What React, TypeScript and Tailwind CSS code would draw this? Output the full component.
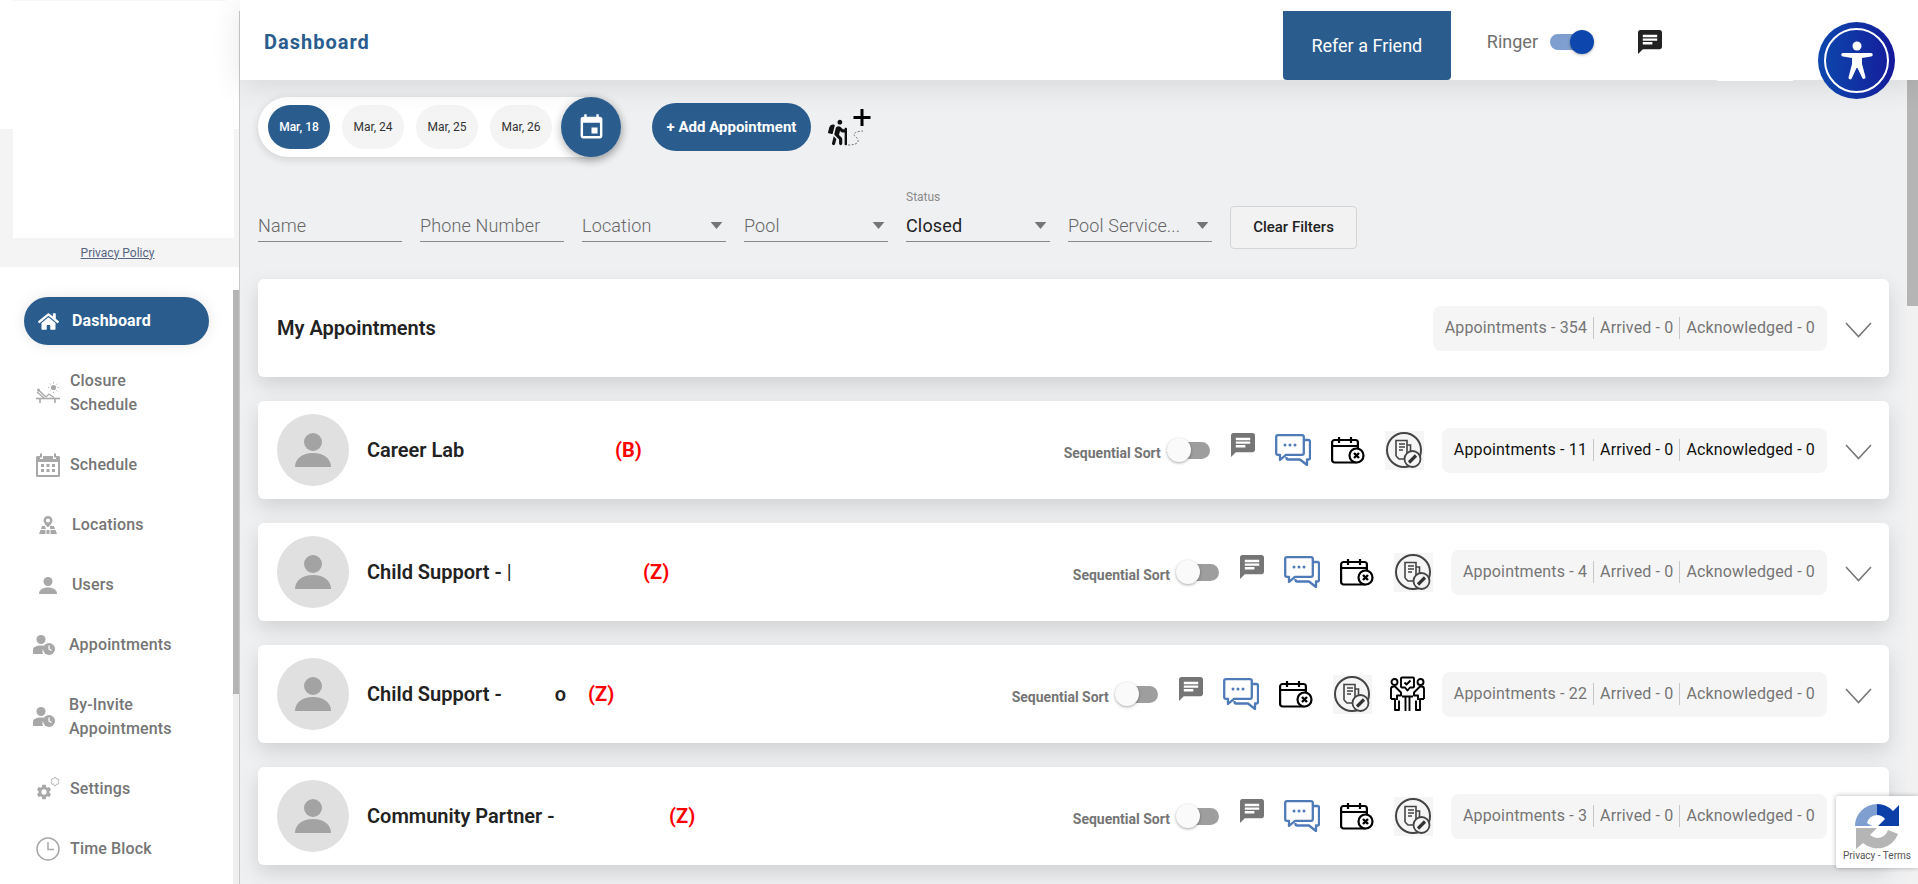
import React from 'react';
import { FaHome, FaHiking } from 'react-icons/fa';

const Chat = ({ className }: { className: string }) => (
  <svg viewBox="2 2 20 20" className={className} fill="currentColor">
    <path d="M20 2H4c-1.1 0-1.99.9-1.99 2L2 22l4-4h14c1.1 0 2-.9 2-2V4c0-1.1-.9-2-2-2zM6 9h12v2H6V9zm8 5H6v-2h8v2zm4-6H6V6h12v2z" />
  </svg>
);

const BlueChat = () => (
  <svg viewBox="0 0 36 32" className="w-[36px] h-[32px] shrink-0" fill="none" stroke="#4f7ab8" strokeWidth="2.3" strokeLinejoin="round">
    <path d="M29 6h4.5a1.5 1.5 0 0 1 1.5 1.5V24a1.5 1.5 0 0 1-1.5 1.5H32V31l-7-5.5H13a1.5 1.5 0 0 1-1.5-1.5v-1" />
    <path d="M3 1.2h24a1.8 1.8 0 0 1 1.8 1.8v16a1.8 1.8 0 0 1-1.8 1.8H11L5 26v-5.2H3A1.8 1.8 0 0 1 1.2 19V3A1.8 1.8 0 0 1 3 1.2z" />
    <g fill="#4f7ab8" stroke="none">
      <circle cx="10" cy="11" r="1.5" />
      <circle cx="15" cy="11" r="1.5" />
      <circle cx="20" cy="11" r="1.5" />
    </g>
  </svg>
);

const CalX = () => (
  <svg viewBox="0 0 34 28" className="w-[34px] h-[28px] shrink-0" fill="none" stroke="#000" strokeWidth="2.2">
    <rect x="1.1" y="4" width="25.8" height="22.5" rx="2.5" />
    <path d="M1 10h26M8 1v6M20 1v6" />
    <circle cx="25.5" cy="19.5" r="7" fill="#fff" />
    <path d="M23 17l5 5M28 17l-5 5" strokeWidth="2.4" />
  </svg>
);

const DocEdit = () => (
  <svg viewBox="0 0 39 39" className="w-[39px] h-[39px] shrink-0" fill="none" stroke="#444" strokeWidth="1.6">
    <rect width="39" height="39" fill="#f5f5f5" stroke="none" />
    <circle cx="19" cy="19" r="17" strokeWidth="2" />
    <path d="M11 25V9.5h11V24" />
    <path d="M14 13h6M14 16h6M14 19h4M22 14h3.5V24M11 25l3 3h8" />
    <circle cx="27.5" cy="28" r="8" fill="#f5f5f5" strokeWidth="1.8" />
    <path d="M24 31.5l7-7" strokeWidth="3.2" stroke="#333" />
  </svg>
);

const Team = () => (
  <svg viewBox="0 0 35 36" className="w-[35px] h-[36px] shrink-0" fill="none" stroke="#000" strokeWidth="1.9" strokeLinejoin="round">
    <circle cx="4.5" cy="6" r="3" />
    <circle cx="30.5" cy="6" r="3" />
    <path d="M12 1.5h11a1 1 0 0 1 1 1v8a1 1 0 0 1-1 1h-3l-2.5 3-2.5-3h-3a1 1 0 0 1-1-1v-8a1 1 0 0 1 1-1z" />
    <path d="M14.5 6.5l2 2 4-4" />
    <path d="M1 23V13a2.5 2.5 0 0 1 2.5-2.5H5l6 6v3H7v4.500M1 23h4v11h4V24.500" />
    <path d="M34 23V13a2.500 2.500 0 0 0-2.500-2.500H30l-6 6v3h4v4.500M34 23h-4v11h-4V24.500" />
    <path d="M12 20.500h11M15.500 20.500V35M19.500 20.500V35" />
  </svg>
);

const Person = ({ className }: { className: string }) => (
  <svg viewBox="0 0 36 34" className={className} fill="currentColor">
    <circle cx="18" cy="9" r="9" />
    <path d="M0 34c0-8 7-14 18-14s18 6 18 14z" />
  </svg>
);

// sidebar icons, drawn by hand
const ClosureIcon = () => (
  <svg viewBox="0 0 24 22" className="w-[24px] h-[22px]" fill="none" stroke="#a8a8a8" strokeWidth="1.2">
    <circle cx="17.500" cy="5.500" r="2.600" fill="#a8a8a8" stroke="none" />
    <path d="M17.500 0v1.400M17.500 9.600V11M12 5.500h1.400M21.600 5.500H23M13.600 1.600l1 1M20.400 8.400l1 1M21.400 1.600l-1 1M14.600 8.400l-1 1" strokeWidth="0.8" />
    <circle cx="2.500" cy="8" r="1.500" fill="#a8a8a8" stroke="none" />
    <path d="M1 10l7 6M3 8.500l7 6.500" strokeWidth="1.400" />
    <path d="M10 15l3-3 2 1.500 3 2" />
    <path d="M0 16.500h24" strokeWidth="1.600" />
    <path d="M4 17v4M19 17v4" strokeWidth="1.600" />
  </svg>
);

const ScheduleIcon = () => (
  <svg viewBox="0 0 24 24" className="w-[24px] h-[24px]">
    <path d="M1.500 3H4v3h3V3h10v3h3V3h2.500A1.500 1.500 0 0 1 24 4.500v18a1.500 1.500 0 0 1-1.500 1.500h-21A1.500 1.500 0 0 1 0 22.500v-18A1.500 1.500 0 0 1 1.500 3z" fill="#a8a8a8" />
    <rect x="2" y="9" width="20" height="13" fill="#fff" />
    <path d="M5 0.500v4M19 0.500v4" stroke="#a8a8a8" strokeWidth="2" />
    <g fill="#a8a8a8">
      <rect x="5" y="11" width="3" height="3" />
      <rect x="10.500" y="11" width="3" height="3" />
      <rect x="16" y="11" width="3" height="3" />
      <rect x="5" y="16" width="3" height="3" />
      <rect x="10.500" y="16" width="3" height="3" />
      <rect x="16" y="16" width="3" height="3" />
    </g>
  </svg>
);

const LocationIcon = () => (
  <svg viewBox="0 0 18 18" className="w-[18px] h-[18px]" fill="#a8a8a8">
    <path d="M9 0a4.500 4.500 0 0 0-4.500 4.500C4.500 7.500 9 11.500 9 11.500s4.500-4 4.500-7A4.500 4.500 0 0 0 9 0zm0 6.500a2 2 0 1 1 0-4 2 2 0 0 1 0 4z" />
    <path d="M3 10h3l1 3H2zM11 10h4l1 3h-5zM1.500 14h5v4H0zM7.500 14h3v4h-3zM11.500 14h5l1.500 4h-6.500z" />
  </svg>
);

const UserIcon = () => (
  <svg viewBox="0 0 18 17" className="w-[18px] h-[17px]" fill="#a8a8a8">
    <circle cx="9" cy="4.500" r="4.500" />
    <path d="M0 17c0-4 3.500-6.500 9-6.500s9 2.500 9 6.500z" />
  </svg>
);

const ApptIcon = () => (
  <svg viewBox="0 0 22 20" className="w-[22px] h-[20px]" fill="#a8a8a8">
    <circle cx="8" cy="4.500" r="4.500" />
    <path d="M0 19v-4c0-3 3-4.500 8-4.500 2 0 3.500.3 4.500.8A6.500 6.500 0 0 0 10 19z" />
    <circle cx="16" cy="14" r="6" />
    <path d="M16 10.500V14l2.500 1.500" fill="none" stroke="#fff" strokeWidth="1.300" />
  </svg>
);

const GearIcon = () => (
  <svg viewBox="0 0 24 24" className="w-[24px] h-[24px]" fill="#a8a8a8">
    <g transform="translate(-1 6) scale(0.75)">
      <path d="M19.140 12.940c.04-.3.060-.61.060-.94 0-.32-.02-.64-.07-.94l2.030-1.580a.49.49 0 0 0 .12-.61l-1.920-3.320a.488.488 0 0 0-.59-.22l-2.390.96c-.5-.38-1.030-.7-1.620-.94l-.36-2.540a.484.484 0 0 0-.48-.41h-3.840c-.24 0-.43.17-.47.41l-.36 2.540c-.59.24-1.130.57-1.620.94l-2.390-.96c-.22-.08-.47 0-.59.22L2.740 8.870c-.12.21-.08.47.12.61l2.030 1.580c-.05.3-.09.63-.09.94s.02.64.07.94l-2.030 1.580a.49.49 0 0 0-.12.61l1.920 3.320c.12.22.37.29.59.22l2.390-.96c.5.38 1.030.7 1.620.94l.36 2.540c.05.24.24.41.48.41h3.840c.24 0 .44-.17.47-.41l.36-2.540c.59-.24 1.130-.56 1.620-.94l2.390.96c.22.08.47 0 .59-.22l1.920-3.320c.12-.22.07-.47-.12-.61l-2.010-1.580zM12 15.600c-1.980 0-3.600-1.620-3.600-3.600s1.620-3.600 3.600-3.600 3.600 1.620 3.600 3.600-1.620 3.600-3.600 3.600z" />
    </g>
    <g transform="translate(14 -0.500) scale(0.42)" fill="none" stroke="#a8a8a8" strokeWidth="2">
      <path d="M19.140 12.940c.04-.3.060-.61.060-.94 0-.32-.02-.64-.07-.94l2.030-1.580a.49.49 0 0 0 .12-.61l-1.920-3.320a.488.488 0 0 0-.59-.22l-2.390.96c-.5-.38-1.030-.7-1.620-.94l-.36-2.540a.484.484 0 0 0-.48-.41h-3.840c-.24 0-.43.17-.47.41l-.36 2.540c-.59.24-1.130.57-1.620.94l-2.390-.96c-.22-.08-.47 0-.59.22L2.740 8.870c-.12.21-.08.47.12.61l2.030 1.580c-.05.3-.09.63-.09.94s.02.64.07.94l-2.030 1.580a.49.49 0 0 0-.12.61l1.920 3.320c.12.22.37.29.59.22l2.390-.96c.5.38 1.030.7 1.620.94l.36 2.540c.05.24.24.41.48.41h3.840c.24 0 .44-.17.47-.41l.36-2.540c.59-.24 1.130-.56 1.620-.94l2.390.96c.22.08.47 0 .59-.22l1.920-3.320c.12-.22.07-.47-.12-.61l-2.010-1.580z" />
    </g>
  </svg>
);

const ClockIcon = () => (
  <svg viewBox="0 0 24 24" className="w-[24px] h-[24px]" fill="none" stroke="#a8a8a8" strokeWidth="1.500">
    <circle cx="12" cy="12" r="11" />
    <path d="M12 5v7.500h6" />
  </svg>
);

const nav = [
  { icon: <ClosureIcon />, label: ['Closure', 'Schedule'], h: 'h-[84px]', pl: 'pl-[36px]', w: 'w-[24px]', gap: 'gap-[10px]' },
  { icon: <ScheduleIcon />, label: ['Schedule'], h: 'h-[60px]', pl: 'pl-[36px]', w: 'w-[24px]', gap: 'gap-[10px]' },
  { icon: <LocationIcon />, label: ['Locations'], h: 'h-[60px]', pl: 'pl-[39px]', w: 'w-[18px]', gap: 'gap-[15px]' },
  { icon: <UserIcon />, label: ['Users'], h: 'h-[60px]', pl: 'pl-[39px]', w: 'w-[18px]', gap: 'gap-[15px]' },
  { icon: <ApptIcon />, label: ['Appointments'], h: 'h-[60px]', pl: 'pl-[33px]', w: 'w-[22px]', gap: 'gap-[14px]' },
  { icon: <ApptIcon />, label: ['By-Invite', 'Appointments'], h: 'h-[84px]', pl: 'pl-[33px]', w: 'w-[22px]', gap: 'gap-[14px]' },
  { icon: <GearIcon />, label: ['Settings'], h: 'h-[60px]', pl: 'pl-[36px]', w: 'w-[24px]', gap: 'gap-[10px]' },
  { icon: <ClockIcon />, label: ['Time Block'], h: 'h-[60px]', pl: 'pl-[36px]', w: 'w-[24px]', gap: 'gap-[10px]' },
];

const Sidebar = () => (
  <aside className="w-[240px] shrink-0 flex bg-white">
    <div className="w-[239px] flex flex-col">
      <div className="h-[129px] mx-[13px] border-t border-[#f7f7f7]" />
      <div className="h-[138px] bg-[#f4f4f4] flex flex-col">
        <div className="h-[109px] ml-[13px] mr-[5px] bg-white" />
        <div className="flex-1 flex items-center justify-center pr-[4px]">
          <a className="text-[12px] leading-none underline text-[#56657f]">Privacy Policy</a>
        </div>
      </div>
      <div className="flex flex-1 min-h-0">
        <div className="w-[233px]">
          <div className="mt-[30px] ml-[24px] w-[185px] h-[48px] mb-[6px] rounded-full bg-[#2a5d8e] shadow-[0_0_14px_rgba(0,0,0,0.1)] flex items-center pl-[14px] text-white">
            <FaHome className="w-[21px] h-[19px]" />
            <span className="ml-[13px] text-[16px] font-bold tracking-[0.15px]">Dashboard</span>
          </div>
          {nav.map((n) => (
            <div key={n.label.join()} className={`flex items-center ${n.h} ${n.pl} ${n.gap}`}>
              <span className={`${n.w} flex justify-center shrink-0`}>{n.icon}</span>
              <span className="text-[16px] leading-[24px] font-medium tracking-[0.15px] text-[#757575]">
                {n.label.map((l) => (
                  <div key={l}>{l}</div>
                ))}
              </span>
            </div>
          ))}
        </div>
        <div className="w-[6px] mt-[23px] bg-[#efefef]">
          <div className="h-[404px] bg-[#b5b5b5]" />
        </div>
      </div>
    </div>
    <div className="w-px mt-[11px] bg-[#c9c9c9]" />
  </aside>
);

const dates = ['Mar, 18', 'Mar, 24', 'Mar, 25', 'Mar, 26'];

const DateRow = () => (
  <div className="flex items-center h-[60px]">
    <div className="w-[363px] h-[60px] rounded-full bg-white shadow-[0_2px_8px_rgba(0,0,0,0.14)] flex items-center pl-[10px] gap-[12px]">
      {dates.map((d, i) => (
        <div
          key={d}
          className={`w-[62px] h-[44px] rounded-full flex items-center justify-center text-[12px] ${
            i === 0 ? 'bg-[#2a5d8e] text-white font-medium' : 'bg-[#f4f4f4] text-[#333]'
          }`}
        >
          {d}
        </div>
      ))}
      <div className="w-[60px] h-[60px] rounded-full bg-[#2a5d8e] shadow-[0_3px_10px_rgba(0,0,0,0.3)] -ml-[3px] flex items-center justify-center text-white">
        <svg viewBox="0 0 24 24" className="w-[29px] h-[29px]" fill="currentColor">
          <path d="M17 12h-5v5h5v-5zM16 1v2H8V1H6v2H5c-1.110 0-1.990.9-1.990 2L3 19c0 1.100.89 2 2 2h14c1.100 0 2-.9 2-2V5c0-1.100-.9-2-2-2h-1V1h-2zm3 18H5V8h14v11z" />
        </svg>
      </div>
    </div>
    <button className="ml-[31px] w-[159px] h-[48px] rounded-full bg-[#2a5d8e] text-white text-[15px] font-bold">+ Add Appointment</button>
    <div className="ml-[17px] w-[44px] h-[40px] flex items-end">
      <div className="flex items-end">
        <FaHiking className="w-[19px] h-[29px] text-[#111] shrink-0" />
        <svg viewBox="0 0 25 38" className="w-[25px] h-[38px]" fill="none">
          <path d="M15 0v17M6.500 8.500h17" stroke="#000" strokeWidth="3" />
          <path d="M1 36c5 0 11-1 10-5s-5-4-4-6 6-3 9-3" stroke="#777" strokeWidth="1" strokeDasharray="2 1.500" />
        </svg>
      </div>
    </div>
  </div>
);

const Field = ({ label, select, top, dark }: { label: string; select?: boolean; top?: string; dark?: boolean }) => (
  <div className="w-[144px] h-[52px] flex flex-col shrink-0">
    <div className="h-[14px] text-[12px] leading-[14px] text-[#8a8a8a]">{top}</div>
    <div className="flex-1 flex items-center justify-between border-b border-[#8a8a8a] pb-[2px] mt-[8px]">
      <span className={`text-[18px] font-light tracking-[0.15px] whitespace-nowrap ${dark ? 'text-[#222] font-normal' : 'text-[#666]'}`}>{label}</span>
      {select && (
        <svg viewBox="0 0 10 6" className="w-[13px] h-[7px] mr-[3px] shrink-0" fill="#757575">
          <path d="M0 0h10L5 6z" />
        </svg>
      )}
    </div>
  </div>
);

const Filters = () => (
  <div className="flex items-start gap-[18px] mt-[33px] h-[59px]">
    <Field label="Name" />
    <Field label="Phone Number" />
    <Field label="Location" select />
    <Field label="Pool" select />
    <Field label="Closed" top="Status" select dark />
    <Field label="Pool Service..." select />
    <button className="w-[127px] h-[43px] mt-[16px] border border-[#d5d5d5] rounded-[4px] bg-[#f2f2f3] text-[15px] font-medium text-[#222]">Clear Filters</button>
  </div>
);

const Chip = ({ n, dark }: { n: number; dark?: boolean }) => {
  const text = dark ? 'text-[#111]' : 'text-[#757575]';
  return (
    <div className={`h-[45px] rounded-[8px] bg-[#f5f5f5] flex items-center px-[12px] text-[16px] tracking-[0.15px] whitespace-nowrap ${text}`}>
      <span className="pr-[6px] border-r border-[#c8c8c8] leading-[22px]">Appointments - {n}</span>
      <span className="px-[6px] border-r border-[#c8c8c8] leading-[22px]">Arrived - 0</span>
      <span className="pl-[6px] leading-[22px]">Acknowledged - 0</span>
    </div>
  );
};

const Chevron = () => (
  <svg viewBox="0 0 27 16" className="w-[27px] h-[16px] ml-[18px] mt-[4px] shrink-0" fill="none" stroke="#777" strokeWidth="1.600">
    <path d="M1 1l12.500 13.500L26 1" />
  </svg>
);

const Toggle = () => (
  <div className="relative w-[43px] h-[24px] flex items-center shrink-0">
    <div className="ml-[7px] w-[36px] h-[17px] rounded-full bg-[#9e9e9e]" />
    <div className="absolute left-0 top-0 w-[24px] h-[24px] rounded-full bg-[#fafafa] shadow-[0_1px_3px_rgba(0,0,0,0.35)]" />
  </div>
);

const Avatar = () => (
  <div className="w-[72px] h-[72px] rounded-full bg-[#e0e0e0] flex items-center justify-center shrink-0">
    <Person className="w-[36px] h-[34px] text-[#a3a3a3]" />
  </div>
);

type Row = { name: React.ReactNode; nameW: string; tag: string; n: number; dark?: boolean; team?: boolean };

const rows: Row[] = [
  { name: 'Career Lab', nameW: 'w-[248px]', tag: '(B)', n: 11, dark: true },
  {
    name: (
      <>
        Child Support - <span className="font-normal">|</span>
      </>
    ),
    nameW: 'w-[276px]',
    tag: '(Z)',
    n: 4,
  },
  {
    name: (
      <>
        Child Support -<span className="ml-[53px]">o</span>
      </>
    ),
    nameW: 'w-[221px]',
    tag: '(Z)',
    n: 22,
    team: true,
  },
  { name: 'Community Partner -', nameW: 'w-[302px]', tag: '(Z)', n: 3 },
];

const Card = ({ row }: { row: Row }) => (
  <div className="h-[98px] rounded-[6px] bg-white shadow-[0_8px_20px_rgba(0,0,0,0.13)] flex items-center pl-[19px] pr-[17px]">
    <Avatar />
    <div className={`ml-[18px] text-[20px] font-semibold text-[#222] whitespace-nowrap ${row.nameW}`}>{row.name}</div>
    <div className="text-[20px] font-bold text-[#ff0000]">{row.tag}</div>
    <div className="ml-auto flex items-center">
      <span className="text-[14px] font-bold text-[#757575] mt-[6px] mr-[6px] whitespace-nowrap">Sequential Sort</span>
      <Toggle />
      <Chat className="w-[24px] h-[24px] ml-[21px] mb-[10px] text-[#757575] shrink-0" />
      <span className="ml-[20px]"><BlueChat /></span>
      <span className="ml-[20px]"><CalX /></span>
      <span className="ml-[20px]"><DocEdit /></span>
      {row.team && <span className="ml-[18px]"><Team /></span>}
      <span className={row.team ? 'ml-[17px]' : 'ml-[18px]'}><Chip n={row.n} dark={row.dark} /></span>
      <Chevron />
    </div>
  </div>
);

const Header = () => (
  <header className="relative z-10 h-[80px] bg-white shadow-[0_6px_30px_rgba(0,0,0,0.1)] flex items-start pl-[24px]">
    <h1 className="mt-[28px] text-[20px] leading-[28px] font-bold tracking-[1px] text-[#2a5d8e]">Dashboard</h1>
    <button className="ml-auto mt-[11px] w-[168px] h-[69px] rounded-b-[4px] bg-[#2a5d8e] text-white text-[18px]">Refer a Friend</button>
    <span className="ml-[36px] mt-[31px] text-[18px] leading-[22px] text-[#6f6f6f]">Ringer</span>
    <div className="relative ml-[12px] mt-[30px] w-[44px] h-[24px] flex items-center">
      <div className="w-[40px] h-[16px] rounded-full bg-[#7e9fd0]" />
      <div className="absolute right-0 top-0 w-[24px] h-[24px] rounded-full bg-[#0d47ad] shadow-[0_1px_3px_rgba(0,0,0,0.3)]" />
    </div>
    <Chat className="ml-[44px] mt-[30px] w-[24px] h-[24px] text-[#222]" />
    <div className="w-[256px]" />
    <div className="absolute left-[1477px] top-[70px] w-[76px] h-[11px] bg-white" />
  </header>
);

const App = () => (
  <div className="relative w-[1918px] h-[884px] overflow-hidden flex bg-white font-['Roboto',sans-serif]">
    <Sidebar />
    <main className="flex-1 min-w-0 flex flex-col bg-[#eff0f2]">
      <Header />
      <div className="flex flex-1 min-h-0">
        <div className="flex-1 min-w-0 px-[18px] pt-[17px]">
          <DateRow />
          <Filters />
          <div className="mt-[30px] flex flex-col gap-[24px]">
            <div className="h-[98px] rounded-[6px] bg-white shadow-[0_8px_20px_rgba(0,0,0,0.13)] flex items-center pl-[19px] pr-[17px]">
              <span className="text-[20px] font-semibold text-[#222]">My Appointments</span>
              <span className="ml-auto"><Chip n={354} /></span>
              <Chevron />
            </div>
            {rows.map((r) => (
              <Card key={r.tag + r.n} row={r} />
            ))}
          </div>
        </div>
        <div className="w-[11px] bg-[#f1f1f1] shrink-0">
          <div className="h-[226px] bg-[#b5b5b5]" />
        </div>
      </div>
    </main>

    {/* accessibility widget */}
    <div className="absolute z-20 left-[1818px] top-[22px] w-[77px] h-[77px] rounded-full bg-gradient-to-r from-[#0d47ad] to-[#15189a] flex items-center justify-center">
      <div className="w-[65px] h-[65px] rounded-full border-[2.5px] border-white flex items-center justify-center">
        <svg viewBox="0 0 32 40" className="w-[32px] h-[40px]" fill="#fff">
          <circle cx="16" cy="5" r="4.500" />
          <path d="M2 12h28a1.500 1.500 0 0 1 0 3.500l-9 1.500v6l3.500 13a1.700 1.700 0 0 1-3.200 1L16.500 27h-1l-4.800 10.500a1.700 1.700 0 0 1-3.200-1L11 23v-6l-9-1.500A1.500 1.500 0 0 1 2 12z" />
        </svg>
      </div>
    </div>

    {/* recaptcha badge */}
    <div className="absolute z-20 right-0 top-[796px] w-[82px] h-[72px] bg-white rounded-l-[2px] shadow-[0_0_5px_rgba(0,0,0,0.3)] flex flex-col items-center pt-[8px]">
      <svg viewBox="0 0 44 45" className="w-[44px] h-[45px] shrink-0">
        <path d="M22 0a22 22 0 0 1 16 7l6-6v21H23l7-7a11 11 0 0 0-8-4z" fill="#0d3fa8" />
        <path d="M0 22A22 22 0 0 1 22 0v11a11 11 0 0 0-10 8l5 3z" fill="#7e9fd0" />
        <path d="M1 24h21l-7 7a11 11 0 0 0 18-5l10 4A22 22 0 0 1 8 39l-7 6z" fill="#b5b5b5" />
      </svg>
      <span className="text-[10px] leading-[12px] mt-[1px] text-[#555] whitespace-nowrap">Privacy - Terms</span>
    </div>
  </div>
);

export default App;
